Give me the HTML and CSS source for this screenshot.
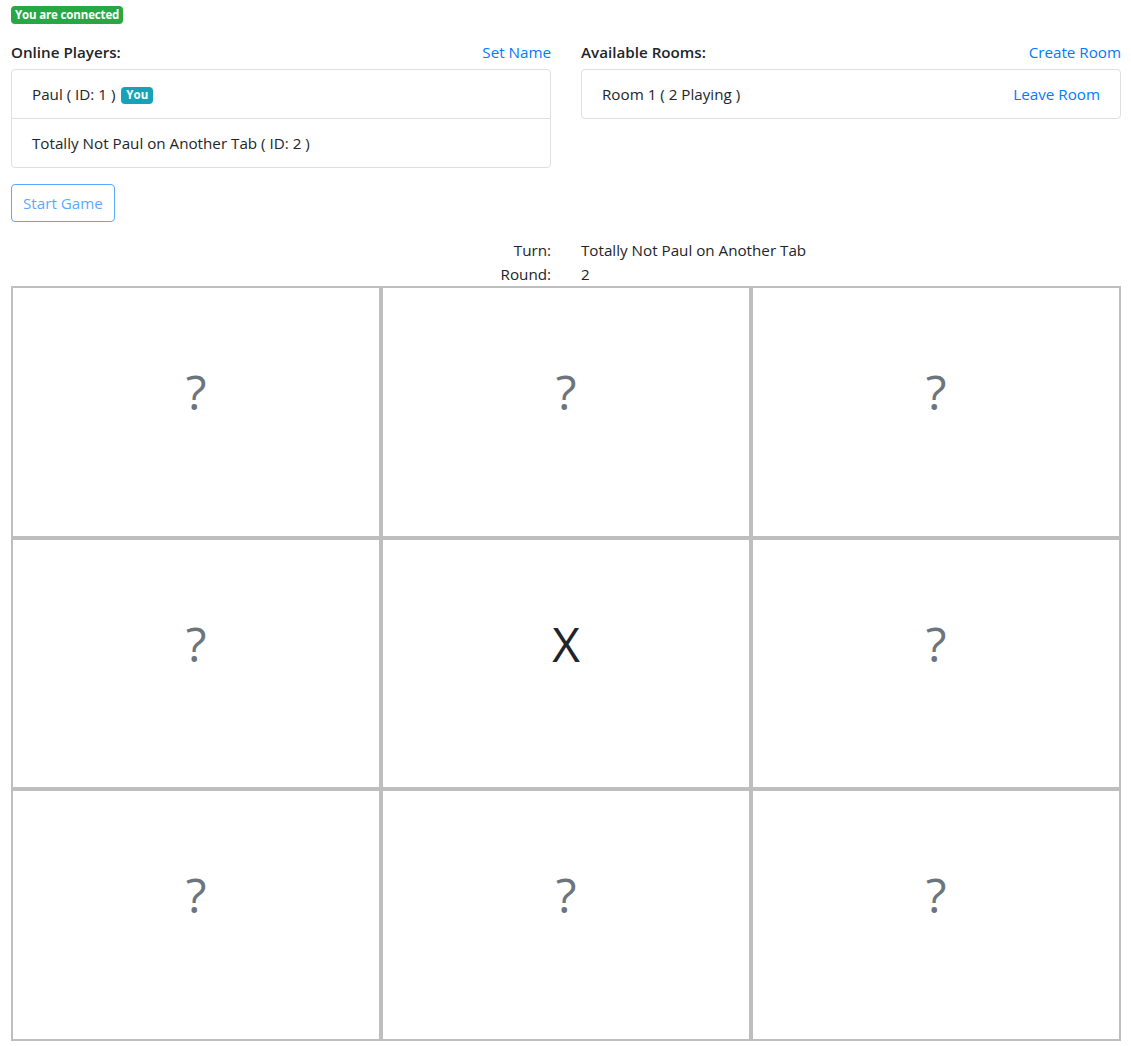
FILE: index.html
```html
<!DOCTYPE html>
<html>
<head>
<meta charset="utf-8">
<link rel="stylesheet" href="styles.css">
</head>
<body>
<div class="wrap">
  <div class="status"><span class="badge badge-success">You are connected</span></div>
  <div class="row">
    <div class="col">
      <div class="col-head">
        <span class="title">Online Players:</span>
        <a class="link">Set Name</a>
      </div>
      <ul class="list">
        <li class="item">Paul ( ID: 1 ) <span class="badge badge-info">You</span></li>
        <li class="item">Totally Not Paul on Another Tab ( ID: 2 )</li>
      </ul>
    </div>
    <div class="col">
      <div class="col-head">
        <span class="title">Available Rooms:</span>
        <a class="link">Create Room</a>
      </div>
      <ul class="list">
        <li class="item item-split"><span>Room 1 ( 2 Playing )</span><a class="link">Leave Room</a></li>
      </ul>
    </div>
  </div>
  <button class="btn" disabled>Start Game</button>
  <div class="info">
    <div class="info-row"><span class="label">Turn:</span><span class="value">Totally Not Paul on Another Tab</span></div>
    <div class="info-row"><span class="label">Round:</span><span class="value">2</span></div>
  </div>
  <div class="board">
    <div class="cell">?</div>
    <div class="cell">?</div>
    <div class="cell">?</div>
    <div class="cell">?</div>
    <div class="cell mark">X</div>
    <div class="cell">?</div>
    <div class="cell">?</div>
    <div class="cell">?</div>
    <div class="cell">?</div>
  </div>
</div>
</body>
</html>
```
FILE: styles.css
```css
* { box-sizing: border-box; }
html, body { margin: 0; padding: 0; background: #fff; }
body {
  font-family: "Open Sans", "Noto Sans", sans-serif;
  font-size: 15.2px;
  line-height: 24px;
  color: #212529;
}
.wrap { width: 1110px; margin-left: 11px; }
.status { display: flex; align-items: flex-start; height: 24px; padding-top: 6px; }
.badge {
  display: inline-block;
  font-size: 11.5px;
  font-weight: 700;
  line-height: 12px;
  padding: 3px 4px;
  border-radius: 4px;
  color: #fff;
}
.badge-success { background: #28a745; letter-spacing: -0.15px; height: 18px; }
.badge-info { background: #17a2b8; padding: 2px 5px 3px; vertical-align: 1px; margin-left: 2px; }
.row { display: flex; gap: 30px; margin-top: 16px; }
.col { flex: 1 1 0; }
.col-head { display: flex; justify-content: space-between; height: 24px; margin-bottom: 5px; }
.title { font-weight: 600; }
.link { color: #007bff; text-decoration: none; cursor: pointer; }
.list { list-style: none; margin: 0; padding: 0; border: 1px solid #dfdfdf; border-radius: 4px; }
.item { padding: 12px 20px; border-top: 1px solid #dfdfdf; height: 49px; }
.item:first-child { border-top: 0; height: 48px; }
.item-split { display: flex; justify-content: space-between; }
.btn {
  display: block;
  margin-top: 16px;
  font-family: inherit;
  font-size: 15.2px;
  line-height: 24px;
  padding: 6px 11px;
  border: 1px solid #007bff;
  border-radius: 4px;
  background: transparent;
  color: #007bff;
  opacity: 0.65;
  height: 38px;
}
.info { margin-top: 16px; }
.info-row { display: flex; gap: 30px; }
.label { flex: 1 1 0; text-align: right; }
.value { flex: 1 1 0; }
.board { display: grid; grid-template-columns: repeat(3, 370px); grid-template-rows: 252px 251px 252px; }
.cell {
  border: 2px solid #bebebe;
  text-align: center;
  font-size: 48px;
  line-height: 58px;
  padding-top: 75px;
  color: #6c757d;
}
.cell.mark { color: #212529; }
```
